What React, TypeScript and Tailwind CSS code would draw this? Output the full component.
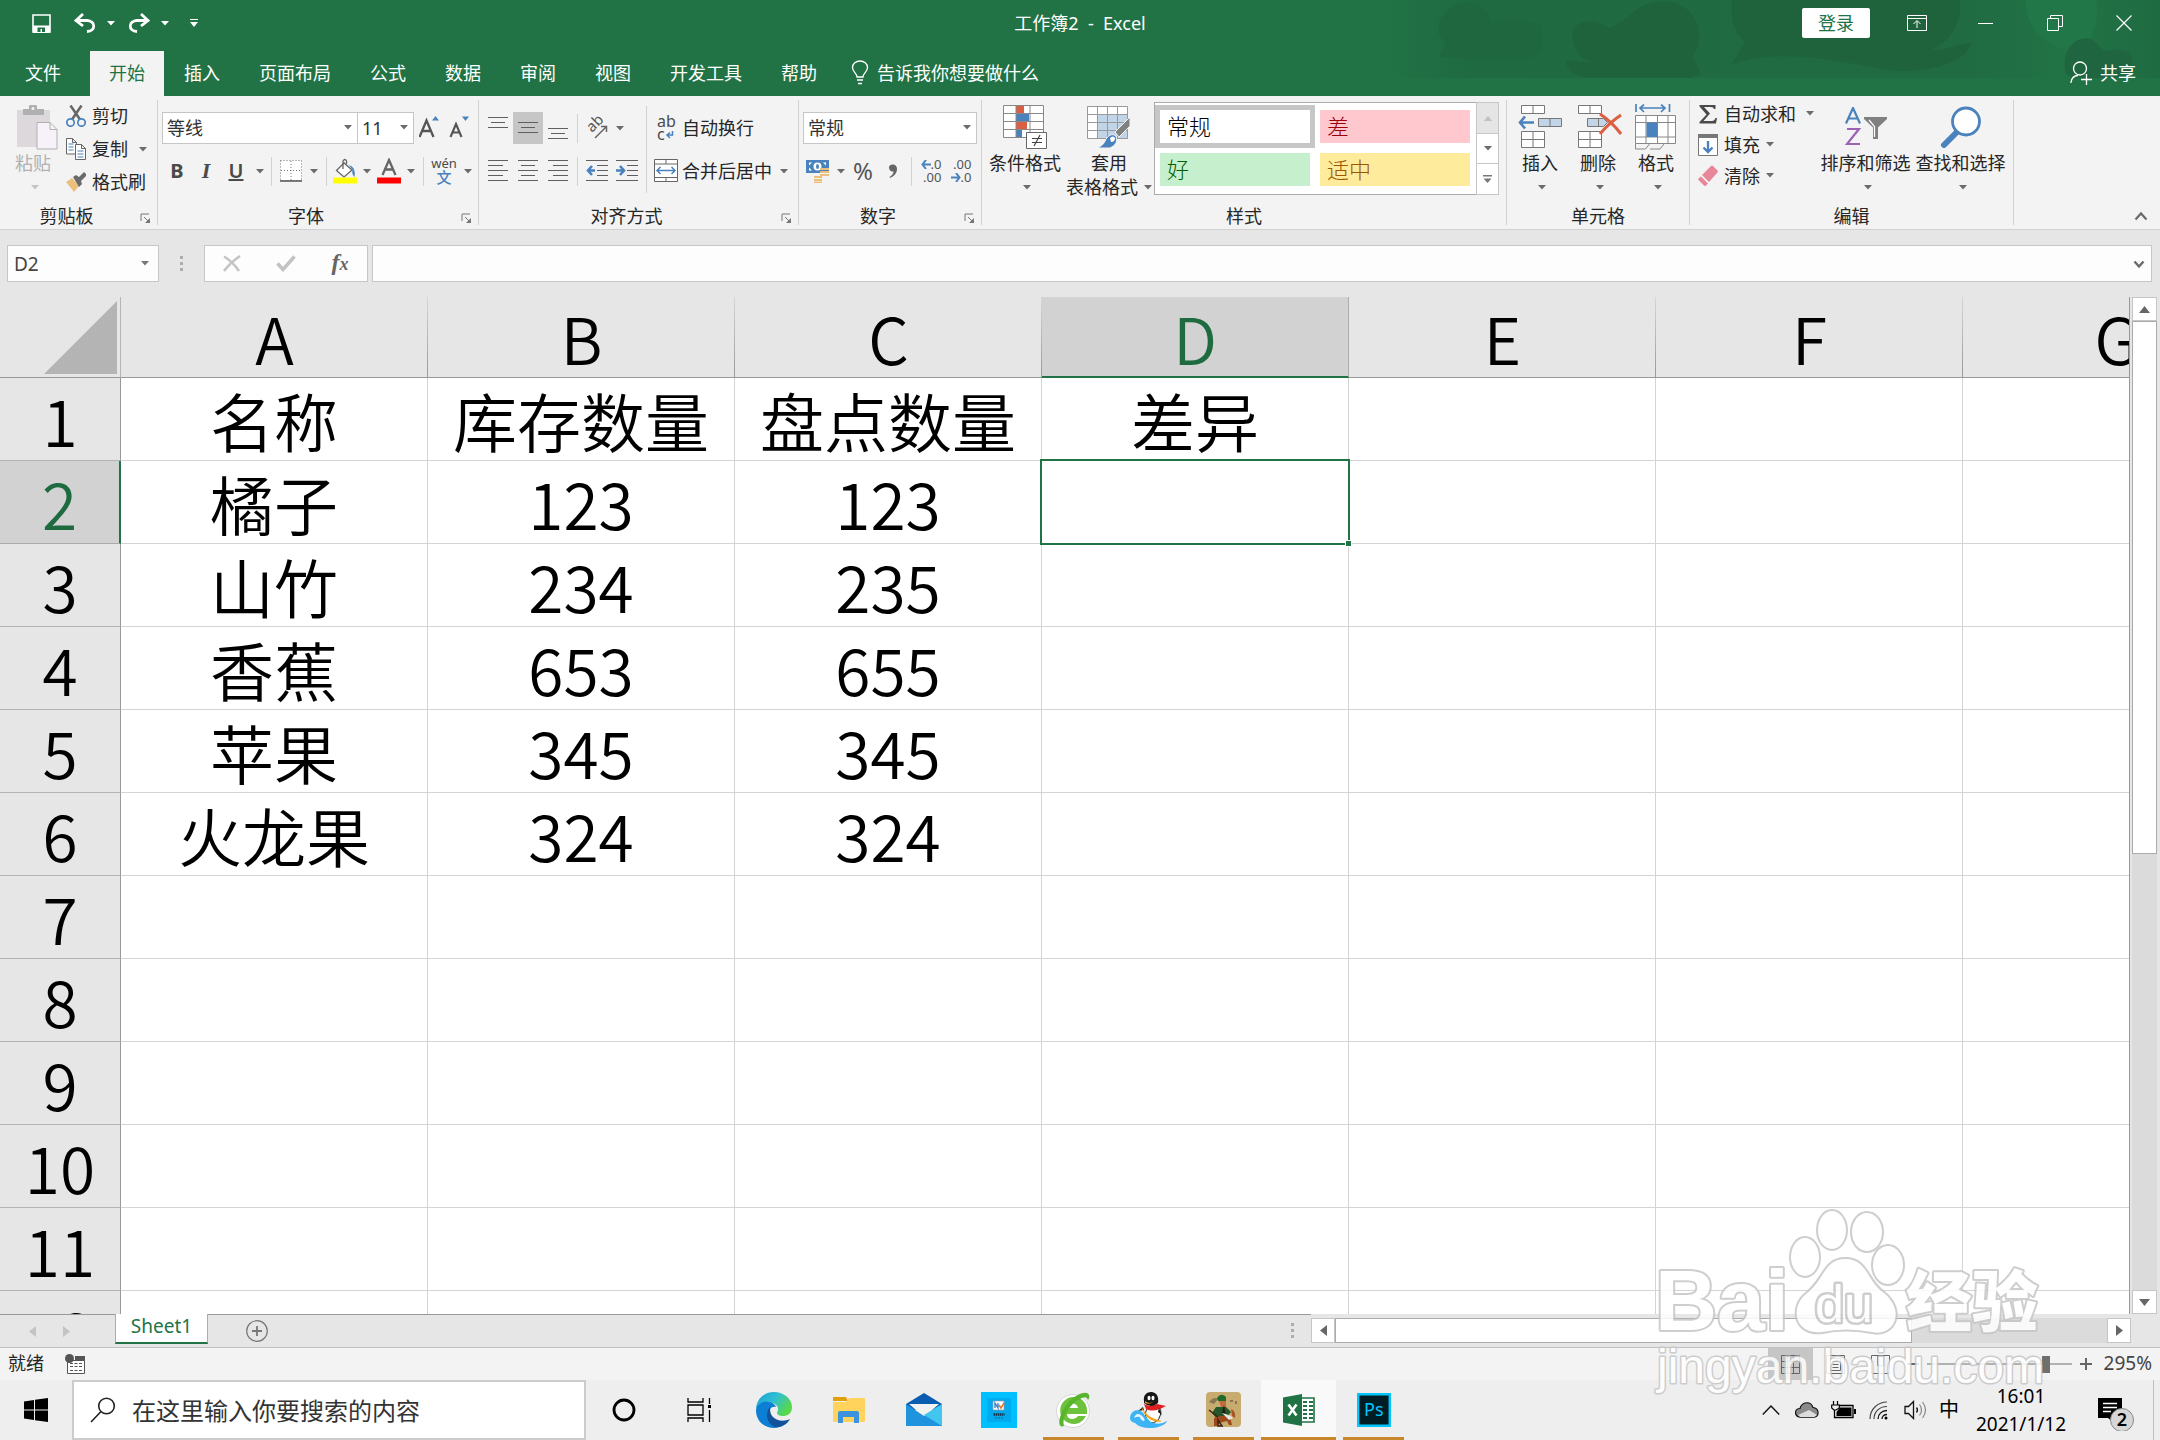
import { Fragment, type ReactNode } from "react";

const COLUMNS = ["A", "B", "C", "D", "E", "F", "G"];

const SHEET: string[][] = [
  ["名称", "库存数量", "盘点数量", "差异"],
  ["橘子", "123", "123"],
  ["山竹", "234", "235"],
  ["香蕉", "653", "655"],
  ["苹果", "345", "345"],
  ["火龙果", "324", "324"],
  [],
  [],
  [],
  [],
  [],
  [],
];

const TABS = ["开始", "插入", "页面布局", "公式", "数据", "审阅", "视图", "开发工具", "帮助"];

/* ---------- small helpers ---------- */

function Svg({ w, h, box, children }: { w: number; h: number; box?: string; children: ReactNode }) {
  return (
    <svg width={w} height={h} viewBox={box ?? `0 0 ${w} ${h}`} fill="none" aria-hidden="true" className="shrink-0">
      {children}
    </svg>
  );
}

function Caret({ color = "#6b6b6b" }: { color?: string }) {
  return (
    <Svg w={8} h={5}>
      <path d="M0 0h8L4 4.5z" fill={color} />
    </Svg>
  );
}

function CaretButton({ label }: { label: string }) {
  return (
    <button aria-label={label} className="flex h-8 w-4 items-center justify-center">
      <Caret />
    </button>
  );
}

function Sep({ className = "mx-1 h-[29px]" }: { className?: string }) {
  return <div className={`w-px shrink-0 bg-[#d2d2d2] ${className}`} />;
}

function IconButton({ label, className = "w-[30px]", children }: { label: string; className?: string; children: ReactNode }) {
  return (
    <button aria-label={label} className={`flex h-8 shrink-0 items-center justify-center ${className}`}>
      {children}
    </button>
  );
}

function Combo({ label, value, className }: { label: string; value: string; className: string }) {
  return (
    <div className={`relative h-8 shrink-0 ${className}`}>
      <select
        aria-label={label}
        defaultValue={value}
        className="h-full w-full appearance-none border border-[#c6c6c6] bg-white pl-1 text-[18px] text-[#333]"
      >
        <option>{value}</option>
      </select>
      <span className="pointer-events-none absolute top-[13px] right-1.5">
        <Caret />
      </span>
    </div>
  );
}

function Group({ title, className, launcher, children }: { title: string; className: string; launcher?: boolean; children: ReactNode }) {
  return (
    <section aria-label={title} className={`flex shrink-0 ${className}`}>
      <div className="flex min-w-0 flex-1 flex-col">
        <div className="flex h-[108px]">{children}</div>
        <div className="flex h-6 items-center">
          <div className="flex-1 text-center leading-6">{title}</div>
          {launcher && (
            <button aria-label={`${title}设置`} className="flex w-6 justify-center pt-1">
              <Svg w={11} h={11}>
                <path d="M1 8V1h8M4 4l4 4" stroke="#777" />
                <path d="M10 5v5H5z" fill="#777" />
              </Svg>
            </button>
          )}
        </div>
      </div>
      <Sep className="mt-1 mb-1" />
    </section>
  );
}

function BigButton({ icon, label, className, muted }: { icon: ReactNode; label: string; className: string; muted?: boolean }) {
  return (
    <button className={`flex shrink-0 flex-col items-center pt-2 ${muted ? "text-[#b1b1b1]" : ""} ${className}`}>
      <span className="flex h-[46px] items-center">{icon}</span>
      <span className="leading-[26px] whitespace-nowrap">{label}</span>
      <span className="flex h-[22px] items-center pl-1">
        <Caret color={muted ? "#c4c4c4" : undefined} />
      </span>
    </button>
  );
}

/* rows: [x, width] for each line */
function Lines({ rows, top = 0 }: { rows: number[][]; top?: number }) {
  return (
    <Svg w={20} h={22}>
      {rows.map(([x, width], i) => (
        <rect key={i} x={x} y={top + i * 5} width={width} height="1" fill="#5f5f5f" />
      ))}
    </Svg>
  );
}

/* ---------- title bar ---------- */

function HeaderArt() {
  return (
    <svg
      className="absolute top-0 right-0"
      width="780"
      height="78"
      viewBox="1380 0 780 78"
      fill="none"
      aria-hidden="true"
    >
      <defs>
        <linearGradient id="fade" x1="0" x2="1" y1="0" y2="0">
          <stop offset="0" stopColor="#1f6a41" stopOpacity="0" />
          <stop offset="0.12" stopColor="#1f6a41" />
          <stop offset="0.75" stopColor="#206b42" />
          <stop offset="0.88" stopColor="#217346" />
          <stop offset="1" stopColor="#1f6b41" />
        </linearGradient>
      </defs>
      <rect x="1380" width="780" height="78" fill="url(#fade)" />
      <path d="M1439 34C1434 0 1485-10 1491 24C1500 16 1512 18 1541 24C1546 46 1538 52 1545 50C1530 66 1480 58 1439 57L1445 45Z" fill="#1f673f" />
      <path d="M1573 40C1568 18 1600 18 1608 28C1630 22 1632 2 1665 1C1700 4 1706 40 1693 56L1701 74L1690 78H1590C1575 76 1566 70 1566 60L1592 63C1580 58 1574 50 1573 40Z" fill="#1f633d" />
      <path d="M1732 0H1960C1962 28 1946 44 1930 50C1950 50 1962 42 1971 43C1968 62 1930 72 1900 71C1850 66 1790 45 1732 64L1745 42C1734 34 1730 16 1732 0Z" fill="#1f633d" />
      <path d="M2026 0H2096C2100 20 2092 44 2080 50C2050 52 2024 30 2026 0Z" fill="#227748" />
      <path d="M2066 74C2060 50 2076 38 2086 38C2100 40 2100 54 2110 50C2125 48 2135 52 2132 62L2128 78H2072Z" fill="#1f6640" />
    </svg>
  );
}

function TitleBar() {
  return (
    <div className="relative flex h-[46px] items-center">
      <div className="flex flex-1 items-center">
        <button aria-label="保存" className="ml-[31px]">
          <Svg w={21} h={21}>
            <path d="M2 2h17v17H2z" stroke="#fff" strokeWidth="1.6" />
            <path d="M2 12.5h17V20H2z" fill="#fff" />
            <path d="M6.5 14.5h7.5v4.5h-3v-3H9.500v3h-3z" fill="#217346" />
          </Svg>
        </button>
        <button aria-label="撤消" className="ml-[22px]">
          <Svg w={22} h={20}>
            <path d="M9 1L2 7.500L9 13M3 7.500H13C22 8 22 18 13 18.500" stroke="#fff" strokeWidth="2.800" />
          </Svg>
        </button>
        <span className="ml-[11px]"><Caret color="#fff" /></span>
        <button aria-label="恢复" className="ml-[13px]">
          <Svg w={22} h={20}>
            <path d="M13 1l7 6.500L13 13M19 7.500H9C0 8 0 18 9 18.500" stroke="#fff" strokeWidth="2.800" />
          </Svg>
        </button>
        <span className="ml-[11px]"><Caret color="#fff" /></span>
        <button aria-label="自定义快速访问工具栏" className="ml-[21px]">
          <Svg w={8} h={8}>
            <path d="M0 3h8L4 8z" fill="#fff" />
            <path d="M0 .5h8" stroke="#fff" />
          </Svg>
        </button>
      </div>
      <h1 className="whitespace-pre">工作簿2  -  Excel</h1>
      <div className="flex flex-1 items-center justify-end">
        <button className="mr-3 h-[30px] rounded-[2px] bg-white px-4 text-[#217346]">登录</button>
        <div className="mr-0.5 flex">
          <IconButton label="功能区显示选项" className="w-[69px]">
            <Svg w={20} h={16}>
              <path d="M.5.5h19v15H.5zM.5 3.500h19M10 13V6M6.500 9L10 5.500L13.500 9" stroke="#fff" />
            </Svg>
          </IconButton>
          <IconButton label="最小化" className="w-[69px]">
            <Svg w={16} h={16}><path d="M0 8.500h15" stroke="#fff" /></Svg>
          </IconButton>
          <IconButton label="向下还原" className="w-[69px]">
            <Svg w={16} h={16}><path d="M.5 3.500h11v12H.5zM3.500 3.500v-3h12v11h-4" stroke="#fff" /></Svg>
          </IconButton>
          <IconButton label="关闭" className="w-[69px]">
            <Svg w={16} h={16}><path d="M.5.5l15 15M15.500.5l-15 15" stroke="#fff" strokeWidth="1.200" /></Svg>
          </IconButton>
        </div>
      </div>
    </div>
  );
}

function TabBar() {
  return (
    <nav className="relative mt-[5px] flex h-[45px] items-stretch">
      <button className="w-[90px] pr-1 pb-0.5">文件</button>
      <div className="flex gap-px">
        {TABS.map((tab) => (
          <button key={tab} className={tab === "开始" ? "bg-[#f3f3f3] px-[19px] pb-0.5 text-[#217346]" : "px-[19px] pb-0.5"}>
            {tab}
          </button>
        ))}
      </div>
      <button className="ml-[15px] flex items-center gap-2 pb-0.5">
        <Svg w={18} h={25}>
          <path d="M6 17C6 13 1.500 12 1.500 7.500C1.500 3.500 5 1 9 1s7.500 2.500 7.500 6.500C16.500 12 12 13 12 17zM6 20h6M7 23.500h4" stroke="#fff" strokeWidth="1.300" />
        </Svg>
        告诉我你想要做什么
      </button>
      <button className="mr-6 ml-auto flex items-center gap-2 pb-0.5">
        <Svg w={22} h={24}>
          <ellipse cx="10" cy="7.500" rx="6.500" ry="6.500" stroke="#fff" strokeWidth="1.300" />
          <path d="M.8 22C1.500 17 4 14.500 8 14.500M11 18.500h11M16.500 13v11" stroke="#fff" strokeWidth="1.300" />
        </Svg>
        共享
      </button>
    </nav>
  );
}

/* ---------- ribbon ---------- */

function ClipboardGroup() {
  const row = "flex h-8 items-center gap-1.5";
  return (
    <Group title="剪贴板" className="w-[158px]" launcher>
      <BigButton
        label="粘贴"
        muted
        className="w-[66px]"
        icon={
          <span className="pl-2">
            <Svg w={42} h={46}>
              <path d="M1 6h33v37H1z" fill="#dcd8dc" />
              <path d="M7 5h6V2q0-1 1-1h6q1 0 1 1v3h7v6H7z" fill="#b0b0b0" />
              <circle cx="17" cy="4.500" r="1.500" fill="#f3f3f3" />
              <path d="M21 18.500h13l7 7V45H21z" fill="#f7f2f9" stroke="#b0b0b0" />
              <path d="M34 18.500v7h7" stroke="#b0b0b0" />
            </Svg>
          </span>
        }
      />
      <div className="flex flex-col gap-px pt-1">
        <button className={row}>
          <Svg w={20} h={22}>
            <path d="M4.500.5L14 14.500M15.500.5L6 14.500" stroke="#666" strokeWidth="2.500" />
            <circle cx="4.500" cy="17.500" r="3.700" stroke="#4a82bd" strokeWidth="1.700" />
            <circle cx="15.500" cy="17.500" r="3.700" stroke="#4a82bd" strokeWidth="1.700" />
          </Svg>
          剪切
        </button>
        <div className="flex items-center">
          <button className={row}>
            <Svg w={20} h={22}>
              <path d="M.5.5h6l4 4V16H.5zM6.500.5v4h4" fill="#fff" stroke="#666" />
              <path d="M2.500 6h5M2.500 9h5M2.500 12h5" stroke="#4a82bd" />
              <path d="M9.500 6.500h6l4 4v11h-10zM15.500 6.500v4h4" fill="#fff" stroke="#666" />
              <path d="M11.500 13h6M11.500 16h6M11.500 19h6" stroke="#4a82bd" />
            </Svg>
            复制
          </button>
          <span className="ml-[11px]"><Caret /></span>
        </div>
        <button className={row}>
          <Svg w={20} h={20}>
            <path d="M0 10l6-4l7 8l-5 6q-4-5-8-10z" fill="#ebc07c" />
            <path d="M7 5l3-2 3 2 5-5 2 2v2l-5 5 1 3-3 3z" fill="#6b6b6b" />
          </Svg>
          格式刷
        </button>
      </div>
    </Group>
  );
}

function FontGroup() {
  return (
    <Group title="字体" className="w-[321px]" launcher>
      <div className="flex flex-col gap-[11px] pt-4 pl-1">
        <div className="flex">
          <Combo label="字体" value="等线" className="w-[196px]" />
          <Combo label="字号" value="11" className="-ml-px w-[57px]" />
          <IconButton label="增大字号" className="ml-1 w-[26px]">
            <Svg w={24} h={24}>
              <path d="M.5 21L7.500 4.500L14.500 21M3 15h9" stroke="#555" strokeWidth="2.300" />
              <path d="M13 4.500L16.500 0L20 4.500z" fill="#4a82bd" />
            </Svg>
          </IconButton>
          <IconButton label="减小字号" className="ml-1 w-[26px]">
            <Svg w={24} h={24}>
              <path d="M1.500 21L7 8L12.500 21M3.500 16.500h7" stroke="#555" strokeWidth="2.100" />
              <path d="M13 .5h7L16.500 5z" fill="#4a82bd" />
            </Svg>
          </IconButton>
        </div>
        <div className="flex items-center text-[20px] text-[#4a4a4a]">
          <IconButton label="加粗"><b>B</b></IconButton>
          <IconButton label="倾斜" className="w-7"><b className="font-['Liberation_Serif',serif] text-[22px] italic">I</b></IconButton>
          <IconButton label="下划线" className="w-8"><span className="font-semibold underline">U</span></IconButton>
          <CaretButton label="下划线选项" />
          <Sep className="mr-1 ml-[3px] h-[29px]" />
          <IconButton label="边框">
            <Svg w={22} h={22}>
              <path d="M.5.5h21v20H.5z" fill="#fff" stroke="#777" strokeDasharray="1 2" />
              <path d="M11 1v19M1 10.500h20" stroke="#777" strokeDasharray="1 2" />
              <path d="M0 21h22" stroke="#555" strokeWidth="1.500" />
            </Svg>
          </IconButton>
          <CaretButton label="边框选项" />
          <Sep />
          <IconButton label="填充颜色" className="w-7">
            <Svg w={24} h={26}>
              <path d="M11 5L3.500 12.500L11 19L19 12z" fill="#fff" stroke="#666" strokeWidth="1.300" />
              <path d="M10 11V3q2-3 3.500 0v3" stroke="#666" strokeWidth="1.300" />
              <path d="M16 7q7 2 5.500 12q-3-3-2-7z" fill="#4a82bd" />
              <path d="M0 19.500h24v6H0z" fill="#ffff00" />
            </Svg>
          </IconButton>
          <CaretButton label="填充颜色选项" />
          <IconButton label="字体颜色" className="w-7">
            <Svg w={24} h={26}>
              <path d="M5.500 17L12 2L18.500 17M8 11.500h8" stroke="#666" strokeWidth="2.300" />
              <path d="M0 19.500h24v6H0z" fill="#ff0000" />
            </Svg>
          </IconButton>
          <CaretButton label="字体颜色选项" />
          <Sep />
          <IconButton label="拼音指南" className="w-8">
            <span className="flex flex-col items-center">
              <span className="text-[13px] leading-[12px]">wén</span>
              <span className="text-[15px] leading-[17px] font-medium text-[#4a82bd]">文</span>
            </span>
          </IconButton>
          <CaretButton label="拼音选项" />
        </div>
      </div>
    </Group>
  );
}

function AlignGroup() {
  return (
    <Group title="对齐方式" className="w-[320px]" launcher>
      <div className="flex flex-col gap-[11px] pt-4 pl-1">
        <div className="flex items-center">
          <IconButton label="顶端对齐"><Lines rows={[[0, 20], [3, 14], [0, 20]]} /></IconButton>
          <IconButton label="垂直居中" className="w-[30px] bg-[#c6c6c6]"><Lines rows={[[0, 20], [3, 14], [0, 20]]} top={5} /></IconButton>
          <IconButton label="底端对齐"><Lines rows={[[0, 20], [3, 14], [0, 20]]} top={11} /></IconButton>
          <Sep />
          <IconButton label="方向">
            <Svg w={24} h={24}>
              <text transform="translate(7 17) rotate(-45)" fill="#555" fontSize="15" fontFamily="Noto Sans, sans-serif">ab</text>
              <path d="M10 22L21 11M16 10.500h5.500V16" stroke="#666" strokeWidth="1.500" />
            </Svg>
          </IconButton>
          <CaretButton label="方向选项" />
        </div>
        <div className="flex items-center">
          <IconButton label="左对齐"><Lines rows={[[0, 20], [0, 15], [0, 20], [0, 15], [0, 20]]} /></IconButton>
          <IconButton label="居中"><Lines rows={[[0, 20], [3, 14], [0, 20], [3, 14], [0, 20]]} /></IconButton>
          <IconButton label="右对齐"><Lines rows={[[0, 20], [5, 15], [0, 20], [5, 15], [0, 20]]} /></IconButton>
          <Sep />
          <IconButton label="减少缩进量">
            <Svg w={22} h={22}>
              <path d="M0 .5h22M11 5.500h11M11 10.500h11M11 15.500h11M0 20.500h22" stroke="#5f5f5f" />
              <path d="M6 6L2 10.500L6 15M2 10.500h7" stroke="#4a82bd" strokeWidth="2.600" />
            </Svg>
          </IconButton>
          <IconButton label="增加缩进量">
            <Svg w={22} h={22}>
              <path d="M0 .5h22M11 5.500h11M11 10.500h11M11 15.500h11M0 20.500h22" stroke="#5f5f5f" />
              <path d="M4 6l4 4.500L4 15M0 10.500h7" stroke="#4a82bd" strokeWidth="2.600" />
            </Svg>
          </IconButton>
        </div>
      </div>
      <Sep className="mt-[10px] ml-1 h-[87px]" />
      <div className="flex flex-col gap-[11px] pt-4 pl-[7px]">
        <button className="flex h-8 items-center gap-1">
          <span className="flex w-6 flex-col pl-[3px] text-left text-[16px] leading-[13px] text-[#4a4a4a]">
            <span>ab</span>
            <span className="flex items-center">
              c
              <Svg w={9} h={8}>
                <path d="M7.500 0v4H2.500M5 1.500L2 4L5 7" stroke="#4a82bd" strokeWidth="1.500" />
              </Svg>
            </span>
          </span>
          自动换行
        </button>
        <div className="flex items-center">
          <button className="flex h-8 items-center gap-1">
            <Svg w={24} h={24}>
              <path d="M.5.5h23v22H.5zM.5 5h23M.5 18.500h23M12 .5V5M12 18.500v4" fill="#fff" stroke="#666" />
              <path d="M3 11.500h18M6.500 8L3 11.500L6.500 15M17.500 8l3.500 3.500l-3.500 3.500" stroke="#4a82bd" strokeWidth="1.500" />
            </Svg>
            合并后居中
          </button>
          <span className="ml-2"><Caret /></span>
        </div>
      </div>
    </Group>
  );
}

function NumberGroup() {
  return (
    <Group title="数字" className="w-[183px]" launcher>
      <div className="flex flex-col gap-[11px] pt-4 pl-1">
        <Combo label="数字格式" value="常规" className="w-[174px]" />
        <div className="flex items-center text-[#555]">
          <IconButton label="会计数字格式" className="w-[30px]">
            <Svg w={24} h={24}>
              <path d="M0 1h23v13H0z" fill="#4a82bd" />
              <path d="M3 3.500h3l-3 3zM20 3.500h-3l3 3zM3 11.500h3l-3-3z" fill="#fff" />
              <circle cx="11.500" cy="7.500" r="4" fill="#fff" />
              <ellipse cx="11.500" cy="7.500" rx="1.500" ry="2.500" fill="#4a82bd" />
              <path d="M14 10h9M14 13h9M14 16h9M8 18h8M8 21h8M8 23.500h8" stroke="#ebc07c" strokeWidth="2" />
            </Svg>
          </IconButton>
          <CaretButton label="会计格式选项" />
          <IconButton label="百分比样式" className="w-7"><span className="text-[24px]">%</span></IconButton>
          <IconButton label="千位分隔样式" className="w-8">
            <Svg w={10} h={16}>
              <path d="M1 4.500C1 .5 9 .2 9 6C9 10 6 13.500 2 15L1.500 14C4 12.500 5.500 10.500 5.500 8.500C3 9 1 7 1 4.500z" fill="#666" />
            </Svg>
          </IconButton>
          <Sep className="mr-1 ml-0.5 h-[29px]" />
          <IconButton label="增加小数位数" className="w-[30px]">
            <span className="flex flex-col items-end text-[13px] leading-[13px]">
              <span className="flex items-center">
                <Svg w={10} h={9}><path d="M5 0L1.500 4.500L5 9M1.500 4.500H10" stroke="#4a82bd" strokeWidth="2" /></Svg>
                .0
              </span>
              <span>.00</span>
            </span>
          </IconButton>
          <IconButton label="减少小数位数" className="w-[30px]">
            <span className="flex flex-col items-end text-[13px] leading-[13px]">
              <span>.00</span>
              <span className="flex items-center">
                <Svg w={10} h={9}><path d="M5 0l3.500 4.500L5 9M8.500 4.500H0" stroke="#4a82bd" strokeWidth="2" /></Svg>
                .0
              </span>
            </span>
          </IconButton>
        </div>
      </div>
    </Group>
  );
}

function StylesGroup() {
  const swatch = "h-[33px] w-[150px] pb-0.5 pl-[7px] text-left text-[22px] font-light leading-[30px]";
  const scroll = "flex items-center justify-center border border-[#c6c6c6]";
  return (
    <Group title="样式" className="w-[525px]">
      <BigButton
        label="条件格式"
        className="ml-1 w-[78px]"
        icon={
          <Svg w={44} h={46}>
            <path d="M.5 1.500h40v32H.5z" fill="#fff" />
            <path d="M13 2h8v8h-8zM13 18h11v8H13z" fill="#dd5f43" />
            <path d="M13 10h13v8H13zM13 26h6v8h-6z" fill="#4a82bd" />
            <path d="M.5 1.500h40v32H.5zM.5 9.500h40M.5 17.500h40M.5 25.500h40M13 1.500v32M27 1.500v32" stroke="#888" />
            <path d="M23.500 28.500h20v16h-20z" fill="#fff" stroke="#666" />
            <path d="M29 34.500h10M29 38.500h10M37 31l-6 11" stroke="#444" strokeWidth="1.200" />
          </Svg>
        }
      />
      <button className="flex w-[90px] shrink-0 flex-col items-center pt-2">
        <span className="flex h-[46px] items-center">
          <Svg w={44} h={44}>
            <path d="M.5 1.500h40v32H.5z" fill="#fff" />
            <path d="M11 10h30v24H11z" fill="#c2d4e8" />
            <path d="M.5 1.500h40v32H.5zM.5 9.500h40M.5 17.500h40M.5 25.500h40M10.500 1.500v32M20.500 1.500v32M30.500 1.500v32" stroke="#999" />
            <path d="M43 12v9L32 32l-4-5z" fill="#808080" stroke="#f3f3f3" />
            <path d="M11 43q7-4 8-9q5-7 10-3q3 8-6 12z" fill="#4a82bd" stroke="#f3f3f3" />
            <path d="M23 33q3-3 5 0q0 4-4 4z" fill="#fff" />
          </Svg>
        </span>
        <span className="leading-[26px]">套用</span>
        <span className="flex items-center gap-1.5 leading-[22px] whitespace-nowrap">
          表格格式
          <Caret />
        </span>
      </button>
      <div className="mt-1.5 flex h-[93px]">
        <div className="grid grid-cols-[150px_150px] content-start gap-[10px] border border-r-0 border-[#ababab] bg-white py-[7px] pr-1.5 pl-[5px]">
          <button className={`${swatch} bg-white text-black outline-[5px] outline-[#c6c6c6] outline-solid`}>常规</button>
          <button className={`${swatch} bg-[#ffc7ce] text-[#9c0006]`}>差</button>
          <button className={`${swatch} bg-[#c6efce] text-[#006100]`}>好</button>
          <button className={`${swatch} bg-[#ffeb9c] text-[#9c5700]`}>适中</button>
        </div>
        <div className="grid w-[23px] grid-rows-[32px_30px_1fr] bg-white">
          <button aria-label="上一行" className={`${scroll} bg-[#e5e5e5]`}>
            <Svg w={8} h={5}><path d="M0 5h8L4 0z" fill="#c0c0c0" /></Svg>
          </button>
          <button aria-label="下一行" className={`${scroll} border-t-0`}><Caret /></button>
          <button aria-label="其他" className={`${scroll} border-t-0`}>
            <Svg w={9} h={8}><path d="M0 0h9v1.500H0zM.5 3.500h8l-4 4.500z" fill="#777" /></Svg>
          </button>
        </div>
      </div>
    </Group>
  );
}

function CellsGroup() {
  return (
    <Group title="单元格" className="w-[183px]">
      <div className="flex pl-1">
        <BigButton
          label="插入"
          className="w-[58px]"
          icon={
            <Svg w={44} h={44}>
              <path d="M3.500.5h23v8h-23zM15 .5v8M3.500 26.500h23v16h-23zM15 26.500v16M3.500 34.500h23" fill="#fff" stroke="#777" />
              <path d="M20.500 13.500h23v8h-23zM32 13.500v8" fill="#c2d4e8" stroke="#777" />
              <path d="M7 11.500L2 17.500L7 23.500M2 17.500h14" stroke="#4a82bd" strokeWidth="2.600" />
            </Svg>
          }
        />
        <BigButton
          label="删除"
          className="w-[58px]"
          icon={
            <span className="pl-1">
              <Svg w={44} h={44}>
                <path d="M.5.5h23v8H.5zM12 .5v8M.5 26.500h23v16H.5zM12 26.500v16M.5 34.500h23" fill="#fff" stroke="#777" />
                <path d="M9.500 13.500h16l4 4l-4 4h-16zM20.500 13.500v8" fill="#c2d4e8" stroke="#777" />
                <path d="M22 9q12 8 21 20M43 10Q31 18 22 29" stroke="#dd5f43" strokeWidth="3" />
              </Svg>
            </span>
          }
        />
        <BigButton
          label="格式"
          className="w-[58px]"
          icon={
            <Svg w={42} h={46}>
              <path d="M1 0v8M34.500 0v8M5 4h25M9 .5L5 4l4 4M26 .5L30 4l-4 4" stroke="#4a82bd" strokeWidth="1.700" />
              <path d="M.5 11.500h40v28H.5zM.5 18.500h40M.5 33h40M11 11.500v28M22.500 11.500v28M33 11.500v28" fill="#fff" stroke="#888" />
              <path d="M11.500 18.500h11v14.500h-11z" fill="#4a82bd" />
              <path d="M.5 40v5h10l4-5M15 45h10l4-5" stroke="#888" />
            </Svg>
          }
        />
      </div>
    </Group>
  );
}

function EditingGroup() {
  const row = "flex h-[31px] items-center gap-1.5";
  return (
    <Group title="编辑" className="w-[324px]">
      <div className="flex w-[124px] flex-col pt-0.5 pl-2">
        <div className="flex items-center">
          <button className={row}>
            <Svg w={20} h={20}>
              <path d="M1.500 1h16v4h-1.500q-.5-2-3-2H6l6 6.500L5.500 17H14q2.500 0 3.500-3h1.500l-1 5.500H1.500v-1.500L8.500 10.500L1.500 2.500z" fill="#4a4a4a" />
            </Svg>
            自动求和
          </button>
          <span className="ml-[10px]"><Caret /></span>
        </div>
        <div className="flex items-center">
          <button className={row}>
            <Svg w={20} h={22}>
              <path d="M.5.5h19v21H.5z" fill="#fff" stroke="#777" />
              <path d="M0 0h20v4H0z" fill="#777" />
              <path d="M10 7v11M5.500 13.500L10 18l4.500-4.500" stroke="#4a82bd" strokeWidth="2.300" />
            </Svg>
            填充
          </button>
          <span className="ml-[6px]"><Caret /></span>
        </div>
        <div className="flex items-center">
          <button className={row}>
            <Svg w={20} h={21}>
              <path d="M13 1q1-1 2 0l5 5q0 1-1 2l-8 9l-7-7z" fill="#e8869a" />
              <path d="M3 11.500l7 7-2 2q-1 1-2 0L.5 15q-.5-1 0-1.500z" fill="#e8869a" />
            </Svg>
            清除
          </button>
          <span className="ml-[6px]"><Caret /></span>
        </div>
      </div>
      <BigButton
        label="排序和筛选"
        className="ml-1 w-[95px]"
        icon={
          <Svg w={42} h={40}>
            <path d="M1 16.500L8 1L15 16.500M3.500 11.500h9" stroke="#4a82bd" strokeWidth="2.200" />
            <path d="M2 22h12L2 37h13" stroke="#9a63b5" strokeWidth="2.200" />
            <path d="M19 10h23v2l-9 8.500V32h-5V20.500L19 12z" fill="#808080" />
            <path d="M24 13l5.500 6.500V30" stroke="#fff" strokeWidth="1.200" />
          </Svg>
        }
      />
      <BigButton
        label="查找和选择"
        className="w-[95px]"
        icon={
          <Svg w={42} h={42}>
            <path d="M17 26L4 39" stroke="#4a82bd" strokeWidth="6" strokeLinecap="round" />
            <circle cx="26" cy="15.500" r="13.500" fill="#fff" stroke="#4a82bd" strokeWidth="2.800" />
          </Svg>
        }
      />
    </Group>
  );
}

function Ribbon() {
  return (
    <div className="flex h-[134px] shrink-0 border-b border-[#d2d2d2] bg-[#f3f3f3]">
      <ClipboardGroup />
      <FontGroup />
      <AlignGroup />
      <NumberGroup />
      <StylesGroup />
      <CellsGroup />
      <EditingGroup />
      <button aria-label="折叠功能区" className="mr-3 mb-2 ml-auto self-end">
        <Svg w={14} h={10}><path d="M1.500 8.500L7 2.500l5.500 6" stroke="#6b6b6b" strokeWidth="2.200" /></Svg>
      </button>
    </div>
  );
}

/* ---------- formula bar ---------- */

function Dots() {
  return (
    <Svg w={4} h={16}>
      <path d="M0 0h3v3H0zM0 6h3v3H0zM0 12h3v3H0z" fill="#adadad" />
    </Svg>
  );
}

function FormulaBar() {
  return (
    <div className="flex h-[67px] shrink-0 items-center pr-2 pl-[7px]">
      <div className="relative h-[37px] w-[152px]">
        <input aria-label="名称框" defaultValue="D2" className="h-full w-full border border-[#c6c6c6] bg-[#fdfdfd] pl-1.5 text-[19px] text-[#444]" />
        <span className="pointer-events-none absolute top-4 right-[10px]"><Caret color="#777" /></span>
      </div>
      <div className="flex w-[45px] justify-center"><Dots /></div>
      <div className="flex h-[37px] w-[164px] border border-[#c6c6c6] bg-[#fdfdfd]">
        <IconButton label="取消" className="h-full w-[54px]">
          <Svg w={18} h={17}><path d="M1 1.500Q9 6 16 16M17 1Q7 8 1 16" stroke="#c3c3c3" strokeWidth="2.500" /></Svg>
        </IconButton>
        <IconButton label="输入" className="h-full w-[54px]">
          <Svg w={20} h={17}><path d="M1.500 8.500L7 14.500L18.500 1.500" stroke="#c3c3c3" strokeWidth="3.500" /></Svg>
        </IconButton>
        <IconButton label="插入函数" className="h-full w-[54px]">
          <span className="pb-1 font-['Liberation_Serif',serif] text-[24px] leading-none font-bold text-[#666] italic">
            f<span className="text-[18px]">x</span>
          </span>
        </IconButton>
      </div>
      <div className="relative ml-1 h-[37px] flex-1">
        <input aria-label="编辑栏" className="h-full w-full border border-[#c6c6c6] bg-[#fdfdfd] px-2" />
        <button aria-label="展开编辑栏" className="absolute top-[15px] right-[7px]">
          <Svg w={12} h={9}><path d="M1.500 1.500L6 6.500l4.500-5" stroke="#6b6b6b" strokeWidth="2.500" /></Svg>
        </button>
      </div>
    </div>
  );
}

/* ---------- worksheet ---------- */

function Grid() {
  return (
    <div className="min-w-0 flex-1 overflow-hidden border-r border-[#999]">
      <table className="w-[2270px] table-fixed border-separate border-spacing-0 bg-white font-['Noto_Sans_CJK_SC',sans-serif] text-[64px] leading-[82px] font-[350] text-black">
        <colgroup>
          <col className="w-[121px]" />
          {COLUMNS.map((c) => <col key={c} className="w-[307px]" />)}
        </colgroup>
        <thead>
          <tr className="h-[81px]">
            <th aria-label="全选" className="border-r border-b border-[#999] border-r-[#b4b4b4] bg-[#e6e6e6] p-0 align-bottom">
              <span className="flex justify-end pr-[3px] pb-[3px]">
                <Svg w={73} h={73}><path d="M73 0v73H0z" fill="#b4b4b4" /></Svg>
              </span>
            </th>
            {COLUMNS.map((c) => (
              <th
                key={c}
                scope="col"
                className={
                  c === "D"
                    ? "border-r border-b-2 border-r-[#ababab] border-b-[#217346] bg-[#d2d2d2] p-0 font-[350] leading-[78px] text-[#1e6b40]"
                    : "border-b border-[#999] bg-[#e6e6e6] bg-[linear-gradient(#d6d6d6,#999999)] bg-[length:1px_100%] bg-right bg-no-repeat p-0 font-[350] leading-[78px]"
                }
              >
                {c}
              </th>
            ))}
          </tr>
        </thead>
        <tbody>
          {SHEET.map((cells, r) => (
            <tr key={r} className="h-[83px]">
              <th
                scope="row"
                className={
                  r === 1
                    ? "border-r-2 border-b border-r-[#217346] border-b-[#ababab] bg-[#d2d2d2] p-0 font-[350] text-[#1e6b40]"
                    : "border-r border-b border-r-[#999] border-b-[#b4b4b4] bg-[#e6e6e6] p-0 font-[350]"
                }
              >
                {r + 1}
              </th>
              {COLUMNS.map((c, i) => {
                const selected = r === 1 && c === "D";
                return (
                  <td
                    key={c}
                    className={`border-r border-b border-[#d4d4d4] p-0 text-center whitespace-nowrap ${selected ? "relative" : ""}`}
                  >
                    {cells[i]}
                    {selected && (
                      <Fragment>
                        <span className="absolute -inset-[2px] border-2 border-[#217346]" />
                        <span className="absolute -right-[4px] -bottom-[4px] size-[7px] border border-white bg-[#217346]" />
                      </Fragment>
                    )}
                  </td>
                );
              })}
            </tr>
          ))}
        </tbody>
      </table>
    </div>
  );
}

function VerticalScroll() {
  const button = "flex h-6 shrink-0 items-center justify-center border border-[#c6c6c6] bg-white";
  return (
    <div className="mr-[3px] ml-[2px] flex w-[25px] flex-col bg-[#dbdbdb]">
      <button aria-label="向上滚动" className={button}>
        <Svg w={11} h={7}><path d="M0 7h11L5.500 0z" fill="#666" /></Svg>
      </button>
      <div className="flex-[532] border border-[#ababab] bg-white" />
      <div className="flex-[436]" />
      <button aria-label="向下滚动" className={button}>
        <Svg w={11} h={7}><path d="M0 0h11L5.500 7z" fill="#666" /></Svg>
      </button>
    </div>
  );
}

function SheetBar() {
  const button = "flex w-6 items-center justify-center border border-[#c6c6c6] bg-white";
  return (
    <div className="flex h-[34px] shrink-0 border-b border-[#c0c0c0]">
      <div className="flex flex-1 border-t border-[#999]">
        <div className="flex w-[115px] items-center gap-[27px] pl-[29px]">
          <button aria-label="上一张工作表"><Svg w={7} h={11}><path d="M7 0v11L0 5.500z" fill="#c3c3c3" /></Svg></button>
          <button aria-label="下一张工作表"><Svg w={7} h={11}><path d="M0 0v11l7-5.500z" fill="#c3c3c3" /></Svg></button>
        </div>
        <button className="-mt-px h-[30px] w-[93px] border-r border-b-2 border-l border-x-[#ababab] border-b-[#217346] bg-white pb-1 text-[19px] leading-[24px] text-[#217346]">
          Sheet1
        </button>
        <button aria-label="新工作表" className="ml-[38px]">
          <Svg w={22} h={22}>
            <circle cx="11" cy="11" r="10.300" stroke="#777" strokeWidth="1.200" />
            <path d="M6 11h10M11 6v10" stroke="#777" strokeWidth="1.800" />
          </Svg>
        </button>
        <div className="ml-auto flex items-center pr-4"><Dots /></div>
      </div>
      <div className="mt-1 mr-[29px] flex h-[25px] w-[820px] bg-[#dbdbdb]">
        <button aria-label="向左滚动" className={button}>
          <Svg w={7} h={11}><path d="M7 0v11L0 5.500z" fill="#666" /></Svg>
        </button>
        <div className="w-[577px] border border-[#ababab] bg-white" />
        <button aria-label="向右滚动" className={`${button} ml-auto`}>
          <Svg w={7} h={11}><path d="M0 0v11l7-5.500z" fill="#666" /></Svg>
        </button>
      </div>
    </div>
  );
}

function StatusBar() {
  return (
    <div className="flex h-8 shrink-0 items-center bg-[#f3f3f3] px-2">
      <span className="pb-0.5">就绪</span>
      <button aria-label="宏录制" className="ml-[21px]">
        <Svg w={20} h={20}>
          <path d="M2.500 6.500h17v13h-17z" fill="#fff" stroke="#555" />
          <path d="M10 2h10v4.500H10z" fill="#555" />
          <circle cx="4.500" cy="4.500" r="4.500" fill="#555" />
          <path d="M5 9.500h12M5 12.500h12M5 16.500h12" stroke="#555" strokeDasharray="3 1.500" />
        </Svg>
      </button>
      <div className="ml-auto flex items-center">
        <IconButton label="普通" className="w-[45px] bg-[#c6c6c6]">
          <Svg w={19} h={19}><path d="M.5.5h18v18H.5zM.5 6.500h18M.5 12.500h18M6.500.5v18M12.500.5v18" stroke="#666" /></Svg>
        </IconButton>
        <IconButton label="页面布局" className="w-[45px]">
          <Svg w={19} h={19}><path d="M.5.5h18v18H.5zM4.500 3.500h10v12h-10zM6.500 6.500h6M6.500 9.500h6M6.500 12.500h6" stroke="#666" /></Svg>
        </IconButton>
        <IconButton label="分页预览" className="w-[45px]">
          <Svg w={19} h={19}><path d="M.5.5h18v18H.5zM6.500.5v10h6V.5" stroke="#666" /></Svg>
        </IconButton>
        <IconButton label="缩小" className="w-5"><Svg w={12} h={12}><path d="M0 6h12" stroke="#666" strokeWidth="2" /></Svg></IconButton>
        <input
          type="range"
          aria-label="缩放"
          min={0}
          max={100}
          defaultValue={84}
          className="mx-1 h-8 w-[145px] appearance-none bg-[linear-gradient(#b1b1b1,#b1b1b1)] bg-[length:100%_2px] bg-center bg-no-repeat [&::-webkit-slider-thumb]:h-[17px] [&::-webkit-slider-thumb]:w-2 [&::-webkit-slider-thumb]:appearance-none [&::-webkit-slider-thumb]:bg-[#6f6f6f]"
        />
        <IconButton label="放大" className="w-5"><Svg w={12} h={12}><path d="M0 6h12M6 0v12" stroke="#666" strokeWidth="2" /></Svg></IconButton>
        <span className="ml-2 pb-0.5 text-[19px] text-[#444]">295%</span>
      </div>
    </div>
  );
}

/* ---------- taskbar ---------- */

const APPS: { name: string; running?: boolean; active?: boolean; icon: ReactNode }[] = [
  {
    name: "Cortana",
    icon: <Svg w={24} h={24}><circle cx="12" cy="12" r="10" stroke="#000" strokeWidth="2.800" /></Svg>,
  },
  {
    name: "任务视图",
    icon: (
      <Svg w={24} h={24}>
        <path d="M1 0v4h15V0M1 24v-4h15v4M1 7h15v10H1zM22.500 0v6M22.500 12v12" stroke="#000" strokeWidth="1.300" />
        <path d="M21 7h3v3h-3z" fill="#000" />
      </Svg>
    ),
  },
  {
    name: "Microsoft Edge",
    icon: (
      <Svg w={36} h={36}>
        <defs>
          <linearGradient id="edgeTop" x1="0" x2="1" y1="0" y2=".5">
            <stop offset="0" stopColor="#1f9fd8" />
            <stop offset=".55" stopColor="#30c0d0" />
            <stop offset="1" stopColor="#58d84a" />
          </linearGradient>
        </defs>
        <path d="M0 18C0 7 8 0 18 0c10 0 18 7 18 15c0 7-5 9-9 9c-3 0-6-1-6-3c0-1 1-1 1-4c0-3-3-6-7-6C8 11 0 14 0 18z" fill="url(#edgeTop)" />
        <path d="M0 18C1 12 8 8 13 10c5 1 7 4 7 5c-5-1-7 3-7 7c1 7 8 11 14 11c-3 2-6 3-9 3C8 36 0 29 0 18z" fill="#0c7ed4" />
        <path d="M14 15c-5 5-4 16 5 20c5 1 12-2 15-8c-6 3-14 2-18-3c-2-3-2-6-2-9z" fill="#11529a" />
      </Svg>
    ),
  },
  {
    name: "文件资源管理器",
    icon: (
      <Svg w={32} h={27}>
        <path d="M0 0h13l2 4H0z" fill="#e09f0b" />
        <path d="M0 5h13l3-4h15q1 0 1 1v22q0 1-1 1H0z" fill="#ffd35c" />
        <path d="M5 26V16q0-2 2-2h17q2 0 2 2v10h-5v-6H10v6z" fill="#3a93dc" />
      </Svg>
    ),
  },
  {
    name: "邮件",
    icon: (
      <Svg w={36} h={34}>
        <path d="M0 11L18 0l18 11v6H0z" fill="#0a5db0" />
        <path d="M3 11h30L18 24z" fill="#f2f2f2" />
        <path d="M0 11l18 12L36 11v22H0z" fill="#1f93dd" />
        <path d="M36 11L18 22l18 11z" fill="#41c6f0" />
      </Svg>
    ),
  },
  {
    name: "百度经验",
    icon: (
      <Svg w={36} h={36}>
        <path d="M0 0h36v36H0z" fill="#00bfff" />
        <path d="M6 6h24v24H6z" fill="#00abee" />
        <path d="M12 9h11v9H12z" fill="#fff" stroke="#999" strokeWidth=".7" />
        <path d="M14 16v-5l3 5v-5" stroke="#2a7bd0" strokeWidth="1.300" />
        <path d="M18 13l2 3 3-5" stroke="#e8742c" strokeWidth="1.500" />
        <path d="M12.500 22.500h11" stroke="#17324a" strokeWidth="2.500" strokeDasharray="1.500 .6" />
        <path d="M14 26h9" stroke="#17627f" strokeDasharray="2 1" />
      </Svg>
    ),
  },
  {
    name: "360安全浏览器",
    running: true,
    icon: (
      <Svg w={36} h={36}>
        <circle cx="17" cy="19" r="16.500" fill="#fff" stroke="#d6d6d6" />
        <path d="M17 5a13.500 13.500 0 1 0 13 19h-8q-2 3-5 3c-4 0-6-2-6-5h20C32 11 26 5 17 5zm-6 11c1-6 10-6 11 0z" fill="#6cc23a" fillRule="evenodd" />
        <path d="M8 34C0 37 3 22 11 12C19 2 31-2 33 3q1 2-1 5q-1-4-6-2C15 10 5 25 8 34z" fill="#57b42c" />
      </Svg>
    ),
  },
  {
    name: "QQ",
    running: true,
    icon: (
      <Svg w={37} h={36}>
        <path d="M20 14C14 18 14 26 20 31q8 0 10-7c2-5 0-9-3-11z" fill="#fff" stroke="#222" />
        <path d="M14 9C13 3 17 0 21 0c6 0 8 5 7 11q-7 6-14 0z" fill="#161616" />
        <ellipse cx="19" cy="6" rx="1.500" ry="2.200" fill="#fff" />
        <ellipse cx="23" cy="6" rx="1.500" ry="2.200" fill="#fff" />
        <path d="M15 9q5 4 9 0q-3 4-9 2z" fill="#f3a21b" />
        <path d="M14 12q8 4 13 0l9 2-6 3q-9 3-14 0z" fill="#e02020" />
        <path d="M13 15l-5 4 6-1zM29 16l3 7-4-3z" fill="#161616" />
        <path d="M0 26C1 16 12 16 15 24l6 6q8 4 16-1c-3 8-25 10-32 2q-5-1-5-5z" fill="#3cb4f5" />
        <path d="M4 26q2-6 7-3q5 4 3 6q-4-1-4-4q-3-1-6 1z" fill="#e8f6ff" />
        <path d="M11 14q5 12 21 15q-4 2-11-1q-8-5-10-14z" fill="#f3a21b" />
      </Svg>
    ),
  },
  {
    name: "三国",
    running: true,
    icon: (
      <Svg w={36} h={36}>
        <rect width="35" height="35" rx="4" fill="#c8ab6f" />
        <path d="M3 10q5-6 9-3l-4 5zM24 8h3v2h-3zM29 9h2v3h-2z" fill="#8a7650" />
        <path d="M11 6q4-6 9-1v4h-8z" fill="#1f6b2a" />
        <path d="M13 9h7v6h-5z" fill="#c46b3d" />
        <path d="M10 15h10l5 5-5 6-9 1-5-6z" fill="#24572a" />
        <path d="M18 13l2 12-4-4z" fill="#241a12" />
        <path d="M8 26q8-4 16-1l2 8h-3l-2-4-8 2-2 3H8z" fill="#9c4a1c" />
        <path d="M12 28l4 6h-4zM3 18l9 7" stroke="#3a2414" strokeWidth="1.500" />
        <path d="M16 21q8 2 11 5l-4 2z" fill="#e8e8e8" />
        <path d="M25 17q5 2 4 9l-3-2z" fill="#a85523" />
      </Svg>
    ),
  },
  {
    name: "Excel",
    running: true,
    active: true,
    icon: (
      <Svg w={32} h={32}>
        <path d="M18 4h13v24H18z" fill="#fff" stroke="#217346" strokeWidth="1.600" />
        <path d="M20 8h4M20 12h4M20 16h4M20 20h4M20 24h4M26 8h4M26 12h4M26 16h4M26 20h4M26 24h4" stroke="#217346" strokeWidth="2" />
        <path d="M0 3.500L19 0v32L0 28.500z" fill="#217346" />
        <path d="M5.500 10.500l8 11M13.500 10.500l-8 11" stroke="#fff" strokeWidth="2.600" />
      </Svg>
    ),
  },
  {
    name: "Photoshop",
    running: true,
    icon: (
      <Svg w={34} h={34}>
        <path d="M1.200 1.200h31.600v31.600H1.200z" fill="#001d26" stroke="#00c8ff" strokeWidth="2.400" />
        <text x="7" y="23" fill="#00c8ff" fontSize="18" fontFamily="Noto Sans, sans-serif">Ps</text>
      </Svg>
    ),
  },
];

function Taskbar() {
  return (
    <footer className="flex h-[60px] shrink-0 bg-[#eeeeee]">
      <button aria-label="开始" className="flex w-[72px] items-center justify-center">
        <Svg w={24} h={24}>
          <path d="M0 3.500L10 2v9.500H0zM11 1.800L24 0v11.500H11zM0 12.500h10V22L0 20.500zM11 12.500h13V24l-13-1.800z" fill="#000" />
        </Svg>
      </button>
      <label className="flex w-[514px] items-center gap-4 border-2 border-[#cccccc] bg-white pl-4">
        <Svg w={26} h={26}>
          <circle cx="16.500" cy="9" r="7.800" stroke="#222" strokeWidth="1.600" />
          <path d="M11 14.500L1 25" stroke="#222" strokeWidth="1.600" />
        </Svg>
        <input
          aria-label="搜索"
          placeholder="在这里输入你要搜索的内容"
          className="min-w-0 flex-1 text-[24px] outline-none placeholder:text-[#333] placeholder:opacity-100"
        />
      </label>
      <div className="flex">
        {APPS.map((app) => (
          <button
            key={app.name}
            aria-label={app.name}
            className={`flex w-[75px] flex-col items-center ${app.active ? "bg-[#f9f9f9]" : ""}`}
          >
            <span className="flex h-[57px] items-center pt-[3px]">{app.icon}</span>
            {app.running && <span className={`h-[3px] bg-[#c8872b] ${app.active ? "w-full" : "w-[61px]"}`} />}
          </button>
        ))}
      </div>
      <div className="ml-auto flex items-center">
        <IconButton label="显示隐藏的图标" className="w-9">
          <Svg w={18} h={10}><path d="M.8 9.500L9 1l8.200 8.500" stroke="#111" strokeWidth="1.400" /></Svg>
        </IconButton>
        <IconButton label="OneDrive" className="w-9">
          <Svg w={24} h={16}>
            <path d="M5 15.200C-1 14-1 7 5 6.500C7-1 16-1 18 5.500C24 6 25 14 19 15.200z" fill="#8a8a8a" stroke="#111" strokeWidth="1.200" />
            <path d="M3 13L14 8l8 5q-2 2-3 2H5z" fill="#dcdcdc" />
          </Svg>
        </IconButton>
        <IconButton label="电池" className="w-9">
          <Svg w={25} h={18}>
            <path d="M7 4.500h15v12H3.500V9" stroke="#000" strokeWidth="1.300" />
            <path d="M9 6.500h11.500V15H5.500v-4zM23 8h2v5h-2z" fill="#000" />
            <path d="M2.500 0v4M6.500 0v4M.7 4h7.600v3L5 9H3L.7 7z" stroke="#000" strokeWidth="1.200" fill="#eee" />
          </Svg>
        </IconButton>
        <IconButton label="网络" className="w-9">
          <Svg w={20} h={20}>
            <path d="M1 19C1 9 9 2 18 2M5 19C5 12 10 6.500 18 6.500" stroke="#444" strokeWidth="1.200" />
            <path d="M9 19C9 14 13 10.500 18 10.500M13 19C13 16.500 15 14.500 18 14.500" stroke="#111" strokeWidth="1.300" />
            <circle cx="17" cy="18" r="1.500" fill="#000" />
          </Svg>
        </IconButton>
        <IconButton label="音量" className="w-9">
          <Svg w={23} h={20}>
            <path d="M1 6.500h3.500L9.500 1.500v17L4.500 13.500H1z" stroke="#111" strokeWidth="1.300" />
            <path d="M12.500 7.500q2 2.500 0 5" stroke="#111" strokeWidth="1.300" />
            <path d="M15.500 4.500q4 5.500 0 11M18.500 2q6 8 0 16" stroke="#888" strokeWidth="1.200" />
          </Svg>
        </IconButton>
        <button className="w-8 text-[20px] text-black">中</button>
        <div className="w-28 text-center text-[19px] leading-7 text-black">
          <div>16:01</div>
          <div>2021/1/12</div>
        </div>
        <button aria-label="通知" className="relative ml-5 h-11 w-[42px]">
          <Svg w={40} h={42}>
            <path d="M1 9h24v20h-8v5l-6-5H1z" fill="#000" />
            <path d="M6 14.500h14M6 18.500h14M6 22.500h8" stroke="#fff" strokeWidth="1.400" />
            <circle cx="25" cy="31" r="11.500" fill="#d6d6d6" stroke="#888" />
          </Svg>
          <span className="absolute top-[21px] left-[15px] w-5 text-center text-[18px] leading-[20px] font-semibold text-black">2</span>
        </button>
        <div className="mr-1.5 ml-[14px] h-[60px] w-px bg-[#c0c0c0]" />
      </div>
    </footer>
  );
}

function Watermark() {
  return (
    <svg
      className="pointer-events-none absolute right-[110px] bottom-[35px] opacity-85"
      width="400"
      height="200"
      viewBox="0 0 400 200"
      aria-hidden="true"
    >
      <g fill="#fff" stroke="#c6c6c6" strokeWidth="4" paintOrder="stroke" strokeLinejoin="round">
        <text x="5" y="125" fontSize="86" fontWeight="700" fontFamily="Liberation Sans, sans-serif">Bai</text>
        <ellipse cx="155" cy="52" rx="14" ry="19" />
        <ellipse cx="182" cy="25" rx="14" ry="19" />
        <ellipse cx="217" cy="27" rx="15" ry="19" />
        <ellipse cx="238" cy="60" rx="15" ry="19" />
        <path d="M195 54C218 54 216 76 234 88C256 106 244 132 222 127Q196 122 172 127C144 130 140 102 156 89C174 76 174 54 195 54z" />
        <text x="165" y="117" fontSize="52" strokeWidth="5" fontFamily="Liberation Sans, sans-serif">du</text>
        <text x="256" y="121" fontSize="66" fontWeight="900" fontFamily="Noto Sans CJK SC, sans-serif">经验</text>
        <text x="7" y="178" fontSize="48" strokeWidth="3" fontFamily="Liberation Sans, sans-serif">jingyan.baidu.com</text>
      </g>
    </svg>
  );
}

export default function App() {
  return (
    <div className="relative flex h-screen flex-col overflow-hidden bg-[#e6e6e6] font-['Noto_Sans','Noto_Sans_CJK_SC',sans-serif] text-[18px] leading-6 text-[#262626]">
      <header className="relative h-24 shrink-0 bg-[#217346] text-white">
        <HeaderArt />
        <TitleBar />
        <TabBar />
      </header>
      <Ribbon />
      <FormulaBar />
      <main className="flex min-h-0 flex-1">
        <Grid />
        <VerticalScroll />
      </main>
      <SheetBar />
      <StatusBar />
      <Taskbar />
      <Watermark />
    </div>
  );
}
